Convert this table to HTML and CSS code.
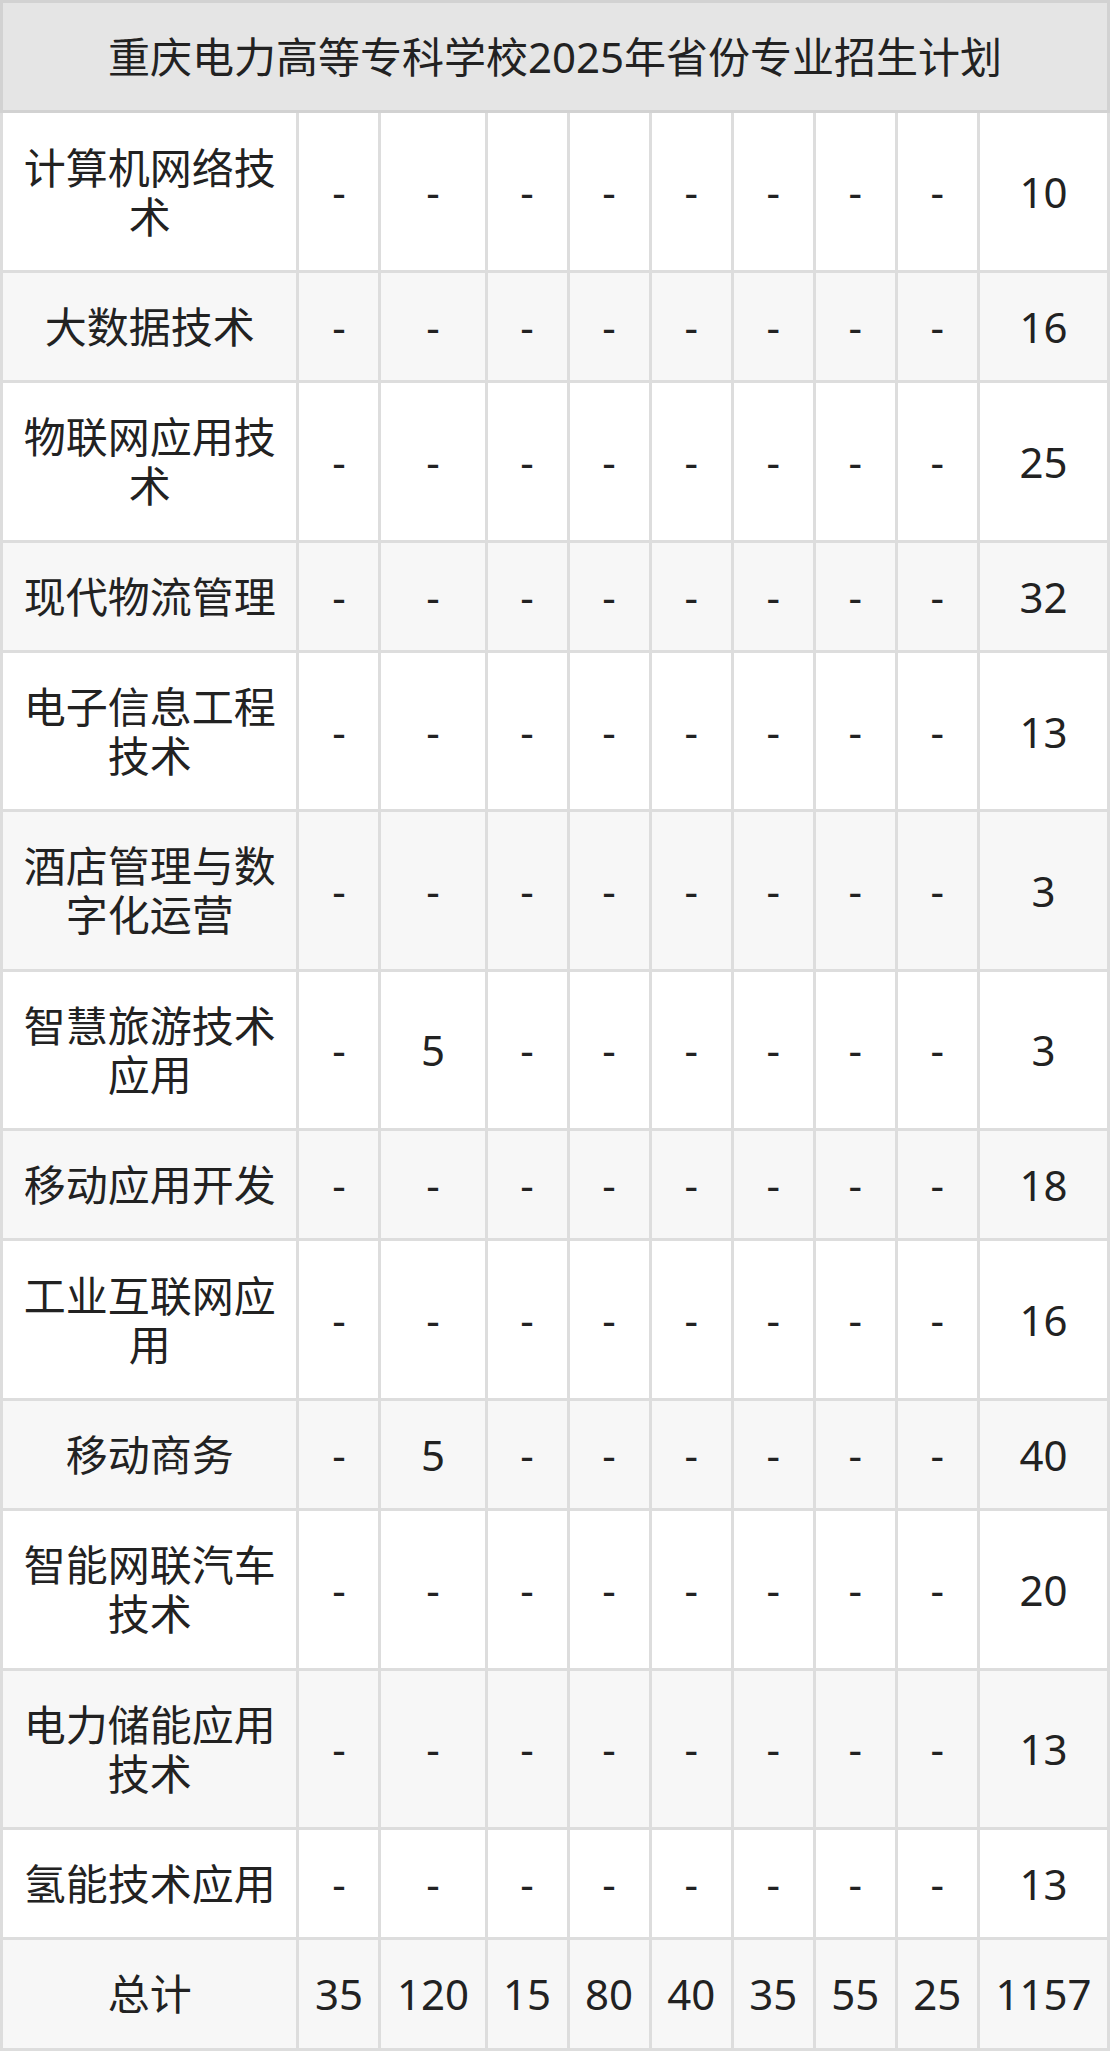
FILE: index.html
```html
<!DOCTYPE html>
<html lang="zh-CN">
<head>
<meta charset="utf-8">
<title>重庆电力高等专科学校2025年省份专业招生计划</title>
<link rel="stylesheet" href="styles.css">
</head>
<body>
<table class="plan">
  <thead>
    <tr><th class="title" colspan="10">重庆电力高等专科学校2025年省份专业招生计划</th></tr>
  </thead>
  <tbody>
    <tr><td class="name">计算机网络技术</td><td>-</td><td>-</td><td>-</td><td>-</td><td>-</td><td>-</td><td>-</td><td>-</td><td>10</td></tr>
    <tr><td class="name">大数据技术</td><td>-</td><td>-</td><td>-</td><td>-</td><td>-</td><td>-</td><td>-</td><td>-</td><td>16</td></tr>
    <tr><td class="name">物联网应用技术</td><td>-</td><td>-</td><td>-</td><td>-</td><td>-</td><td>-</td><td>-</td><td>-</td><td>25</td></tr>
    <tr><td class="name">现代物流管理</td><td>-</td><td>-</td><td>-</td><td>-</td><td>-</td><td>-</td><td>-</td><td>-</td><td>32</td></tr>
    <tr><td class="name">电子信息工程技术</td><td>-</td><td>-</td><td>-</td><td>-</td><td>-</td><td>-</td><td>-</td><td>-</td><td>13</td></tr>
    <tr><td class="name">酒店管理与数字化运营</td><td>-</td><td>-</td><td>-</td><td>-</td><td>-</td><td>-</td><td>-</td><td>-</td><td>3</td></tr>
    <tr><td class="name">智慧旅游技术应用</td><td>-</td><td>5</td><td>-</td><td>-</td><td>-</td><td>-</td><td>-</td><td>-</td><td>3</td></tr>
    <tr><td class="name">移动应用开发</td><td>-</td><td>-</td><td>-</td><td>-</td><td>-</td><td>-</td><td>-</td><td>-</td><td>18</td></tr>
    <tr><td class="name">工业互联网应用</td><td>-</td><td>-</td><td>-</td><td>-</td><td>-</td><td>-</td><td>-</td><td>-</td><td>16</td></tr>
    <tr><td class="name">移动商务</td><td>-</td><td>5</td><td>-</td><td>-</td><td>-</td><td>-</td><td>-</td><td>-</td><td>40</td></tr>
    <tr><td class="name">智能网联汽车技术</td><td>-</td><td>-</td><td>-</td><td>-</td><td>-</td><td>-</td><td>-</td><td>-</td><td>20</td></tr>
    <tr><td class="name">电力储能应用技术</td><td>-</td><td>-</td><td>-</td><td>-</td><td>-</td><td>-</td><td>-</td><td>-</td><td>13</td></tr>
    <tr><td class="name">氢能技术应用</td><td>-</td><td>-</td><td>-</td><td>-</td><td>-</td><td>-</td><td>-</td><td>-</td><td>13</td></tr>
    <tr><td class="name">总计</td><td>35</td><td>120</td><td>15</td><td>80</td><td>40</td><td>35</td><td>55</td><td>25</td><td>1157</td></tr>
  </tbody>
</table>
</body>
</html>
```

FILE: styles.css
```css
html, body {
  margin: 0;
  padding: 0;
  background: #ffffff;
}

.plan {
  width: 1110px;
  border-collapse: collapse;
  font-family: "Noto Sans", "Open Sans", "Noto Sans CJK SC", sans-serif;
  font-size: 42px;
  line-height: 49px;
  color: #222222;
}

.plan th,
.plan td {
  border: 3px solid #dddddd;
  padding: 29.2px 15.5px;
  text-align: center;
  vertical-align: middle;
  font-weight: normal;
}

.plan .title {
  background: #e5e5e5;
  border-color: #d2d2d2;
}

.plan tbody tr:nth-child(even) td {
  background: #f7f7f7;
}
```
